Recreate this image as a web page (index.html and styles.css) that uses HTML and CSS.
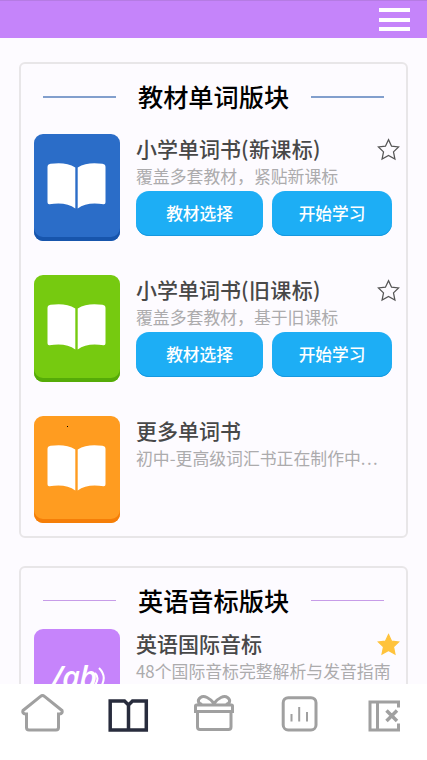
FILE: index.html
```html
<!DOCTYPE html>
<html lang="zh-CN">
<head>
<meta charset="utf-8">
<title>单词书</title>
<link rel="stylesheet" href="styles.css">
</head>
<body>
<svg class="defs" aria-hidden="true">
  <symbol id="book" viewBox="0 0 58 46">
    <path d="M3 .8C12-.6 21 0 27.800 4.500V45.500C21.500 40.500 12 39.500 2 41.300Q0 41.500 0 39.300V4Q0 1.300 3 .8ZM55 .8C46-.6 37 0 30.200 4.500V45.500C36.500 40.500 46 39.500 56 41.300Q58 41.500 58 39.300V4Q58 1.300 55 .8Z" fill="#fff"/>
  </symbol>
  <symbol id="star" viewBox="0 0 24 24">
    <path d="M12 1.700L15.200 8.600L22.500 9.300L17.200 14.500L18.700 22L12 18.200L5.300 22L6.800 14.500L1.500 9.300L8.800 8.600Z"/>
  </symbol>
</svg>
<div class="app">
  <header class="topbar">
    <button class="menu" aria-label="菜单"><i></i><i></i><i></i></button>
  </header>
  <main class="content">
    <section class="card">
      <h2 class="heading blue-rule">教材单词版块</h2>
      <article class="item">
        <div class="cover blue"><svg class="book"><use href="#book"/></svg></div>
        <div class="info">
          <div class="line"><h3>小学单词书<span class="paren">(新课标)</span></h3><svg class="star"><use href="#star"/></svg></div>
          <p>覆盖多套教材，紧贴新课标</p>
          <div class="actions"><button>教材选择</button><button>开始学习</button></div>
        </div>
      </article>
      <article class="item">
        <div class="cover green"><svg class="book"><use href="#book"/></svg></div>
        <div class="info">
          <div class="line"><h3>小学单词书<span class="paren">(旧课标)</span></h3><svg class="star"><use href="#star"/></svg></div>
          <p>覆盖多套教材，基于旧课标</p>
          <div class="actions"><button>教材选择</button><button>开始学习</button></div>
        </div>
      </article>
      <article class="item">
        <div class="cover orange"><svg class="book"><use href="#book"/></svg><span class="dot"></span></div>
        <div class="info">
          <div class="line"><h3>更多单词书</h3></div>
          <p>初中-更高级词汇书正在制作中<span class="ellipsis">...</span></p>
        </div>
      </article>
    </section>
    <section class="card">
      <h2 class="heading purple-rule">英语音标版块</h2>
      <article class="item">
        <div class="cover purple">
          <span class="phonetic">/ab</span>
          <svg class="waves" viewBox="0 0 12 26"><path d="M1 6Q6 11 1 18M5 1Q14 10 6 21"/></svg>
        </div>
        <div class="info">
          <div class="line"><h3>英语国际音标</h3><svg class="star filled"><use href="#star"/></svg></div>
          <p>48个国际音标完整解析与发音指南</p>
        </div>
      </article>
    </section>
  </main>
  <nav class="tabs">
    <svg viewBox="0 0 44 40"><path d="M22.500 2.500Q23.500 2.500 24.500 3.500L42 17.500Q43 20.500 39.500 21H38.500V34.500Q38.500 37 36 37H9Q6.500 37 6.500 34.500V21H5.500Q2 20.500 3 17.500L20.500 3.500Q21.500 2.500 22.500 2.500Z"/></svg>
    <svg class="active" viewBox="0 0 44 40"><path d="M4.200 8H18.500L22.500 12L26.500 8H40.300V37H4.200ZM22.500 12V37"/></svg>
    <svg viewBox="0 0 44 40"><path d="M4.500 12H39.500Q40.500 12 40.500 13V18.500H3.500V13Q3.500 12 4.500 12ZM5.500 19V34Q5.500 36.500 8 36.500H36.500Q39 36.500 39 34V19M22 10.500C18 5 12 2 8.500 4.500C5 7 6 10.500 10 11.500M22 10.500C26 5 32 2 35.500 4.500C39 7 38 10.500 34 11.500"/></svg>
    <svg viewBox="0 0 44 40"><rect x="5.200" y="4.700" width="32.800" height="32.300" rx="5"/><path class="thin" d="M13.500 21V28.500M21.200 14V28.500M29 19V28.500"/></svg>
    <svg viewBox="0 0 44 40"><path d="M34.500 14.500V9H6V37H34.500V30.500M13.500 8V37"/><path class="cross" d="M22.500 17.500L33 28M33 17.500L22.500 28"/></svg>
  </nav>
</div>
</body>
</html>
```
FILE: styles.css
```css
* { box-sizing: border-box; }
body { margin: 0; background: #fdfbff; font-family: "Noto Sans CJK SC", sans-serif; }
h2, h3, p { margin: 0; }
button { border: 0; padding: 0; font-family: inherit; }
.defs { position: absolute; width: 0; height: 0; }
.app { height: 760px; display: flex; flex-direction: column; overflow: hidden; }
.topbar { height: 38px; flex: none; background: #c584fa; border-top: 1px solid #b57be3; display: flex; justify-content: flex-end; padding: 7px 17px 0 0; }
.menu { width: 31px; height: 23px; background: none; display: flex; flex-direction: column; justify-content: space-between; }
.menu i { width: 31px; height: 4px; background: #fff; }
.content { flex: 1; min-height: 0; overflow: hidden; padding: 24px 19px 0; }
.card { height: 476px; border: 2px solid #e8e6e8; border-radius: 6px; padding: 15px 14px 0 13px; margin-bottom: 28px; }
.heading { height: 34px; display: flex; align-items: center; justify-content: space-between; font-size: 25.200px; line-height: 34px; font-weight: 500; color: #000; padding: 0 8px 0 9px; margin-bottom: 21px; white-space: nowrap; }
.heading::before, .heading::after { content: ""; width: 73px; height: 2px; background: #829fcd; }
.blue-rule::before, .blue-rule::after { margin-top: 2px; }
.purple-rule::before, .purple-rule::after { height: 1px; background: #c79ce8; }
.purple-rule { margin-bottom: 12px; }
.item { height: 141px; display: flex; gap: 16px; }
.cover { width: 86px; height: 107px; flex: none; border-radius: 9px; position: relative; padding: 29px 0 0 13px; }
.blue { background: #2b6dc8; box-shadow: inset 0 -4px #1755ac; }
.green { background: #76ca10; box-shadow: inset 0 -4px #55ab08; }
.orange { background: #ff9c20; box-shadow: inset 0 -4px #f57e08; }
.purple { background: #c684fb; }
.book { width: 59px; height: 46px; display: block; }
.dot { position: absolute; left: 33px; top: 10px; width: 1px; height: 1px; background: #000; }
.info { flex: 1; min-width: 0; }
.line { height: 30px; display: flex; justify-content: space-between; align-items: center; }
h3 { font-size: 21px; line-height: 30px; height: 32px; font-weight: 500; color: #484848; white-space: nowrap; }
.paren { letter-spacing: .4px; }
.ellipsis { letter-spacing: 1.400px; }
.star { width: 23px; height: 23px; fill: none; stroke: #555; stroke-width: 1.300; margin-right: -8px; }
.filled { fill: #ffc33c; stroke: #ffc33c; }
p { font-size: 16.850px; line-height: 24px; height: 27px; color: #acabad; white-space: nowrap; }
.actions { display: flex; gap: 9px; }
.actions button { width: 127px; height: 45px; border-radius: 13px; background: #1daef5; box-shadow: inset 0 -1px #1698df; color: #fff; font-size: 16.700px; font-weight: 500; line-height: 43px; padding-bottom: 1px; }
.actions button + button { width: 120px; }
.phonetic { position: absolute; left: 17px; top: 27px; color: #fff; font: italic 600 31px/40px "Open Sans", sans-serif; letter-spacing: -1px; }
.waves { position: absolute; left: 60px; top: 38px; width: 12px; height: 26px; fill: none; stroke: #fff; stroke-width: 2; }
.tabs { height: 76px; flex: none; background: #fff; display: flex; justify-content: space-between; padding: 9px 19px 0 20px; }
.tabs svg { width: 44px; height: 40px; fill: none; stroke: #a0a0a0; stroke-width: 3; }
.tabs .active { stroke: #282c3d; stroke-width: 3.500; }
.tabs .thin { stroke-width: 2; }
.tabs .cross { stroke-width: 3.500; }
```
